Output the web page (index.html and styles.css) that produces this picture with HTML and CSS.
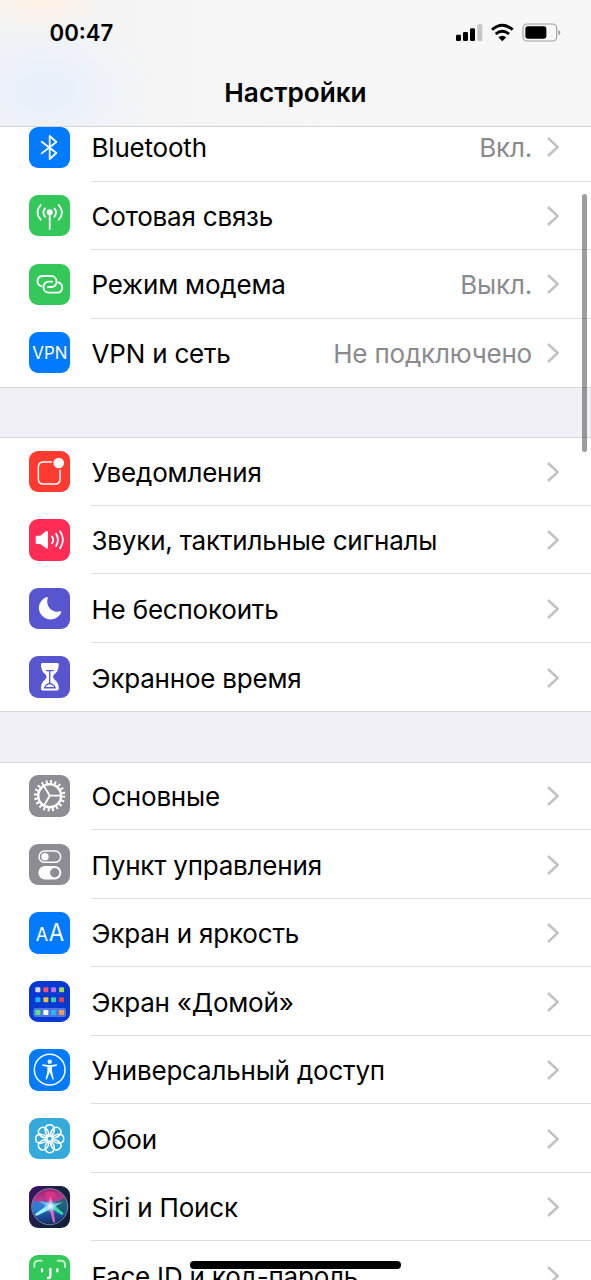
FILE: index.html
```html
<!DOCTYPE html>
<html lang="ru">
<head>
<meta charset="utf-8">
<title>Настройки</title>
<link rel="stylesheet" href="styles.css">
</head>
<body>
<div class="screen">
  <header class="header">
    <div class="status">
      <span class="time">00:47</span>
      <svg class="status-icons" viewBox="0 0 318 60">
        <rect x="3" y="35" width="15" height="19" rx="4"/>
        <rect x="24" y="27" width="15" height="27" rx="4"/>
        <rect x="45" y="16" width="15" height="38" rx="4"/>
        <rect x="67" y="4" width="15" height="50" rx="4" fill="#c6c6c6"/>
        <path d="M111 20Q142-6 173 20M122 33Q142 17 162 33" fill="none" stroke="#000" stroke-width="8.5"/>
        <path d="M130 43Q142 34 154 43L142 55Z"/>
        <rect x="204" y="3" width="101" height="51" rx="13" fill="none" stroke="#a0a0a0" stroke-width="3.5"/>
        <rect x="211" y="10" width="63" height="37" rx="7"/>
        <path d="M310 21Q316 23 316 29T310 37Z" fill="#a0a0a0"/>
      </svg>
    </div>
    <h1 class="title">Настройки</h1>
  </header>

  <main class="list">
    <section class="group">
      <div class="row">
        <svg class="icon blue" viewBox="0 0 124 124"><path class="line w5" d="M38 44L82 78L62 96V27L82 45L38 79"/></svg>
        <div class="body"><span class="label">Bluetooth</span><span class="value">Вкл.</span><svg class="chev" viewBox="0 0 36 60"><path d="M3 3L32 30L3 57"/></svg></div>
      </div>
      <div class="row">
        <svg class="icon green" viewBox="0 0 124 124"><circle class="fill" cx="62" cy="52" r="9"/><path class="line w5" d="M62 54V102"/><path class="line w5" d="M48 40Q38 52 48 65M76 40Q86 52 76 65M35 30Q15 52 35 74M89 30Q109 52 89 74"/></svg>
        <div class="body"><span class="label">Сотовая связь</span><svg class="chev" viewBox="0 0 36 60"><path d="M3 3L32 30L3 57"/></svg></div>
      </div>
      <div class="row">
        <svg class="icon green" viewBox="0 0 124 124"><path class="line w5" d="M37 67C20 61 22 36 42 36H66C88 36 88 69 67 69H57"/><path class="line w5" d="M88 55C105 61 103 86 82 86H60C38 86 38 53 59 53H69"/></svg>
        <div class="body"><span class="label">Режим модема</span><span class="value">Выкл.</span><svg class="chev" viewBox="0 0 36 60"><path d="M3 3L32 30L3 57"/></svg></div>
      </div>
      <div class="row">
        <svg class="icon blue" viewBox="0 0 124 124"><text class="glyph" x="10" y="80" font-size="51" textLength="105" lengthAdjust="spacingAndGlyphs">VPN</text></svg>
        <div class="body"><span class="label">VPN и сеть</span><span class="value">Не подключено</span><svg class="chev" viewBox="0 0 36 60"><path d="M3 3L32 30L3 57"/></svg></div>
      </div>
    </section>

    <section class="group">
      <div class="row">
        <svg class="icon red" viewBox="0 0 124 124"><path class="line w4" d="M67 33H43Q28 33 28 48V84Q28 99 43 99H78Q93 99 93 84V58"/><circle class="fill" cx="89" cy="36" r="16"/></svg>
        <div class="body"><span class="label">Уведомления</span><svg class="chev" viewBox="0 0 36 60"><path d="M3 3L32 30L3 57"/></svg></div>
      </div>
      <div class="row">
        <svg class="icon pink" viewBox="0 0 124 124"><path class="fill" d="M24 50H34L50 37Q57 33 57 41V84Q57 92 50 87L34 75H24Q20 75 20 71V54Q20 50 24 50Z"/><path class="line w5" d="M69 52Q76 62 69 73M81 44Q92 62 81 81M93 37Q110 62 93 88"/></svg>
        <div class="body"><span class="label">Звуки, тактильные сигналы</span><svg class="chev" viewBox="0 0 36 60"><path d="M3 3L32 30L3 57"/></svg></div>
      </div>
      <div class="row">
        <svg class="icon purple" viewBox="0 0 124 124"><path class="fill" d="M51 28Q56 25 56 30C49 54 68 76 93 70Q99 69 96 74C84 99 49 101 35 78C23 58 33 36 51 28Z"/></svg>
        <div class="body"><span class="label">Не беспокоить</span><svg class="chev" viewBox="0 0 36 60"><path d="M3 3L32 30L3 57"/></svg></div>
      </div>
      <div class="row">
        <svg class="icon purple" viewBox="0 0 124 124"><path class="fill" d="M41 21H84Q89 21 89 25V30Q88 45 77 54Q67 62 77 71Q88 80 89 93V99Q89 103 84 103H41Q36 103 36 99V93Q37 80 48 71Q57 62 48 54Q37 45 36 30V25Q36 21 41 21Z"/><path d="M51 44H74M62 46V82M47 95Q49 86 62 82Q76 86 78 95Z" fill="none" stroke="#5856cf" stroke-width="4"/></svg>
        <div class="body"><span class="label">Экранное время</span><svg class="chev" viewBox="0 0 36 60"><path d="M3 3L32 30L3 57"/></svg></div>
      </div>
    </section>

    <section class="group">
      <div class="row">
        <svg class="icon gray" viewBox="0 0 124 124"><circle class="ring" cx="62" cy="62" r="42" stroke-width="10" stroke-dasharray="5.8 7.394"/><circle class="ring" cx="62" cy="62" r="34.5" stroke-width="7"/><path class="line w5" d="M62 62H94M62 62L45 33M62 62L45 91"/></svg>
        <div class="body"><span class="label">Основные</span><svg class="chev" viewBox="0 0 36 60"><path d="M3 3L32 30L3 57"/></svg></div>
      </div>
      <div class="row">
        <svg class="icon gray" viewBox="0 0 124 124"><rect class="line w4" x="30" y="21" width="65" height="34" rx="17"/><circle class="fill" cx="48" cy="38" r="11"/><rect class="fill" x="28" y="66" width="69" height="40" rx="20"/><circle cx="77" cy="86" r="14" fill="#8e8d93"/></svg>
        <div class="body"><span class="label">Пункт управления</span><svg class="chev" viewBox="0 0 36 60"><path d="M3 3L32 30L3 57"/></svg></div>
      </div>
      <div class="row">
        <svg class="icon blue" viewBox="0 0 124 124"><text class="glyph" x="20" y="88" font-size="57" textLength="37" lengthAdjust="spacingAndGlyphs">А</text><text class="glyph" x="59" y="88" font-size="73" textLength="46" lengthAdjust="spacingAndGlyphs">А</text></svg>
        <div class="body"><span class="label">Экран и яркость</span><svg class="chev" viewBox="0 0 36 60"><path d="M3 3L32 30L3 57"/></svg></div>
      </div>
      <div class="row">
        <svg class="icon navy" viewBox="0 0 124 124">
          <rect x="13" y="81" width="98" height="27" rx="6" fill="#4f78df"/>
          <rect x="19" y="19" width="15" height="15" rx="3" fill="#d7d9dc"/><rect x="43" y="19" width="15" height="15" rx="3" fill="#ff4f68"/><rect x="66" y="19" width="15" height="15" rx="3" fill="#b972f5"/><rect x="90" y="19" width="15" height="15" rx="3" fill="#a9d84c"/>
          <rect x="19" y="49" width="15" height="15" rx="3" fill="#14b7fa"/><rect x="43" y="49" width="15" height="15" rx="3" fill="#f5bd35"/><rect x="66" y="49" width="15" height="15" rx="3" fill="#32cfb5"/><rect x="90" y="49" width="15" height="15" rx="3" fill="#f03b46"/>
          <rect x="19" y="87" width="15" height="15" rx="3" fill="#5ce47b"/><rect x="43" y="87" width="15" height="15" rx="3" fill="#fff"/><rect x="66" y="87" width="15" height="15" rx="3" fill="#22b8fa"/><rect x="90" y="87" width="15" height="15" rx="3" fill="#ff964d"/>
        </svg>
        <div class="body"><span class="label">Экран «Домой»</span><svg class="chev" viewBox="0 0 36 60"><path d="M3 3L32 30L3 57"/></svg></div>
      </div>
      <div class="row">
        <svg class="icon blue" viewBox="0 0 124 124"><circle class="ring" cx="62" cy="62" r="46" stroke-width="4.5"/><circle class="fill" cx="62" cy="38" r="6.5"/><path class="fill" d="M41 46L57 48H67L83 46Q87 48 83 50L69 54V66L74 89Q73 94 70 90L62 69L54 90Q51 94 50 89L55 66V54L41 50Q37 48 41 46Z"/></svg>
        <div class="body"><span class="label">Универсальный доступ</span><svg class="chev" viewBox="0 0 36 60"><path d="M3 3L32 30L3 57"/></svg></div>
      </div>
      <div class="row">
        <svg class="icon cyan" viewBox="0 0 124 124">
          <g class="line w4">
            <circle cx="62" cy="62" r="8"/>
            <path d="M56 53C44 39 47 20 62 20S80 39 68 53"/>
            <path d="M56 53C44 39 47 20 62 20S80 39 68 53" transform="rotate(45 62 62)"/>
            <path d="M56 53C44 39 47 20 62 20S80 39 68 53" transform="rotate(90 62 62)"/>
            <path d="M56 53C44 39 47 20 62 20S80 39 68 53" transform="rotate(135 62 62)"/>
            <path d="M56 53C44 39 47 20 62 20S80 39 68 53" transform="rotate(180 62 62)"/>
            <path d="M56 53C44 39 47 20 62 20S80 39 68 53" transform="rotate(225 62 62)"/>
            <path d="M56 53C44 39 47 20 62 20S80 39 68 53" transform="rotate(270 62 62)"/>
            <path d="M56 53C44 39 47 20 62 20S80 39 68 53" transform="rotate(315 62 62)"/>
          </g>
        </svg>
        <div class="body"><span class="label">Обои</span><svg class="chev" viewBox="0 0 36 60"><path d="M3 3L32 30L3 57"/></svg></div>
      </div>
      <div class="row">
        <svg class="icon siri" viewBox="0 0 124 124">
          <defs>
            <radialGradient id="core"><stop offset="0" stop-color="#fff"/><stop offset=".35" stop-color="#c8efff" stop-opacity=".8"/><stop offset="1" stop-color="#7bc8ff" stop-opacity="0"/></radialGradient>
            <linearGradient id="orb" x1=".4" y1="0" x2=".5" y2="1"><stop offset="0" stop-color="#a32072"/><stop offset=".3" stop-color="#b83a8c"/><stop offset=".5" stop-color="#356db5"/><stop offset=".75" stop-color="#194d98"/><stop offset="1" stop-color="#162b5c"/></linearGradient>
          </defs>
          <circle cx="62" cy="62" r="54" fill="url(#orb)"/>
          <path d="M62 60L12 43Q8 62 14 80Z" fill="#2486dc" opacity=".75"/>
          <path d="M62 60L108 35Q118 60 108 85Z" fill="#19606d" opacity=".8"/>
          <path d="M62 60L47 20Q70 10 82 24Z" fill="#ec3884" opacity=".6"/>
          <path d="M60 54L18 84Q18 90 24 89L66 68Z" fill="#9bf2ff"/>
          <path d="M60 62L72 108Q76 113 78 106L71 60Z" fill="#ee62bd"/>
          <path d="M60 64L98 86Q106 88 102 81L70 52Z" fill="#36dfa8"/>
          <path d="M58 62L64 32L72 60Z" fill="#f88fc4"/>
          <path d="M60 56L102 48L68 68Z" fill="#66c7c4"/>
          <path d="M60 50L28 44L58 66Z" fill="#5ab4f2"/>
          <circle cx="64" cy="61" r="20" fill="url(#core)"/>
          <circle cx="62" cy="62" r="54" fill="none" stroke="#8c91ae" stroke-width="2.5"/>
        </svg>
        <div class="body"><span class="label">Siri и Поиск</span><svg class="chev" viewBox="0 0 36 60"><path d="M3 3L32 30L3 57"/></svg></div>
      </div>
      <div class="row">
        <svg class="icon green" viewBox="0 0 124 124"><path d="M16 36V29Q16 17 28 17H38M86 17H96Q108 17 108 29V36M16 88V95Q16 107 28 107H38M86 107H96Q108 107 108 95V88" fill="none" stroke="#b9efc5" stroke-width="6" stroke-linecap="round"/><path class="line w7" d="M39 43V49M85 43V49M64 42V62Q64 69 57 69M42 84Q62 101 82 84"/></svg>
        <div class="body"><span class="label">Face ID и код-пароль</span><svg class="chev" viewBox="0 0 36 60"><path d="M3 3L32 30L3 57"/></svg></div>
      </div>
    </section>
  </main>

  <div class="scrollbar"></div>
  <div class="home-bar"></div>
</div>
</body>
</html>
```
FILE: styles.css
```css
* { box-sizing: border-box; }
body { margin: 0; font-family: Inter, "Noto Sans", sans-serif; color: #000; }
.screen { position: relative; width: 591px; height: 1280px; overflow: hidden; background: #f1f0f7; }

.header {
  position: relative;
  z-index: 1;
  height: 127px;
  border-bottom: 1px solid #d3d3d5;
  background:
    radial-gradient(ellipse 70px 30px at 42px 0, #fff0e2, transparent),
    radial-gradient(ellipse 110px 75px at 45px 92px, #e8f0fc, transparent),
    linear-gradient(90deg, #f3f3f4, #f7f7f8 60%);
}
.status { display: flex; align-items: flex-start; justify-content: space-between; height: 72px; padding: 20px 30px 0 49.5px; }
.time { font-size: 22.2px; line-height: 26px; font-weight: 600; }
.status-icons { width: 106px; height: 20px; margin-top: 3px; }
.title { margin: 0; padding-top: 5px; text-align: center; font-size: 26.2px; line-height: 32px; font-weight: 600; }

.list { margin-top: -14px; }
.group { background: #fff; box-shadow: inset 0 1px #d6d5dc, 0 1px #d6d5dc; }
.group + .group { margin-top: 50.4px; }
.row { display: flex; align-items: center; height: 68.5px; padding-left: 28.6px; }
.icon { flex: none; width: 41.4px; height: 41.4px; border-radius: 9px; }
.body { flex: 1; display: flex; align-items: center; height: 100%; margin-left: 21.5px; padding-right: 32px; border-bottom: 1px solid #dcdcde; }
.row:last-child .body { border-bottom: 0; }
.label, .value { font-size: 26px; line-height: 32px; letter-spacing: -0.2px; white-space: nowrap; padding-top: 3px; }
.value { color: #8a8a8e; }
.value, .label + .chev { margin-left: auto; }
.chev { width: 12px; height: 20px; flex: none; margin-top: 1px; }
.value + .chev { margin-left: 15px; }
.chev path { fill: none; stroke: #c2c2c5; stroke-width: 7.5; }

.blue { background: #007aff; }
.green { background: #34c759; }
.red { background: #ff3a30; }
.pink { background: #ff2d55; }
.purple { background: #5856cf; }
.gray { background: #8e8d93; }
.navy { background: #0638d2; }
.cyan { background: #34aadc; }
.siri { background: linear-gradient(120deg, #3b126b, #172340 50%, #131b33); }

.fill, .glyph { fill: #fff; }
.line { fill: none; stroke: #fff; stroke-linecap: round; stroke-linejoin: round; }
.ring { fill: none; stroke: #fff; }
.w4 { stroke-width: 4.5; }
.w5 { stroke-width: 5.5; }
.w7 { stroke-width: 7; }

.scrollbar { position: absolute; z-index: 2; top: 194px; right: 4px; width: 5px; height: 258px; border-radius: 3px; background: rgba(60, 60, 62, .5); }
.home-bar { position: absolute; z-index: 2; left: 190px; top: 1261px; width: 211px; height: 8px; border-radius: 4px; background: #000; }
```
